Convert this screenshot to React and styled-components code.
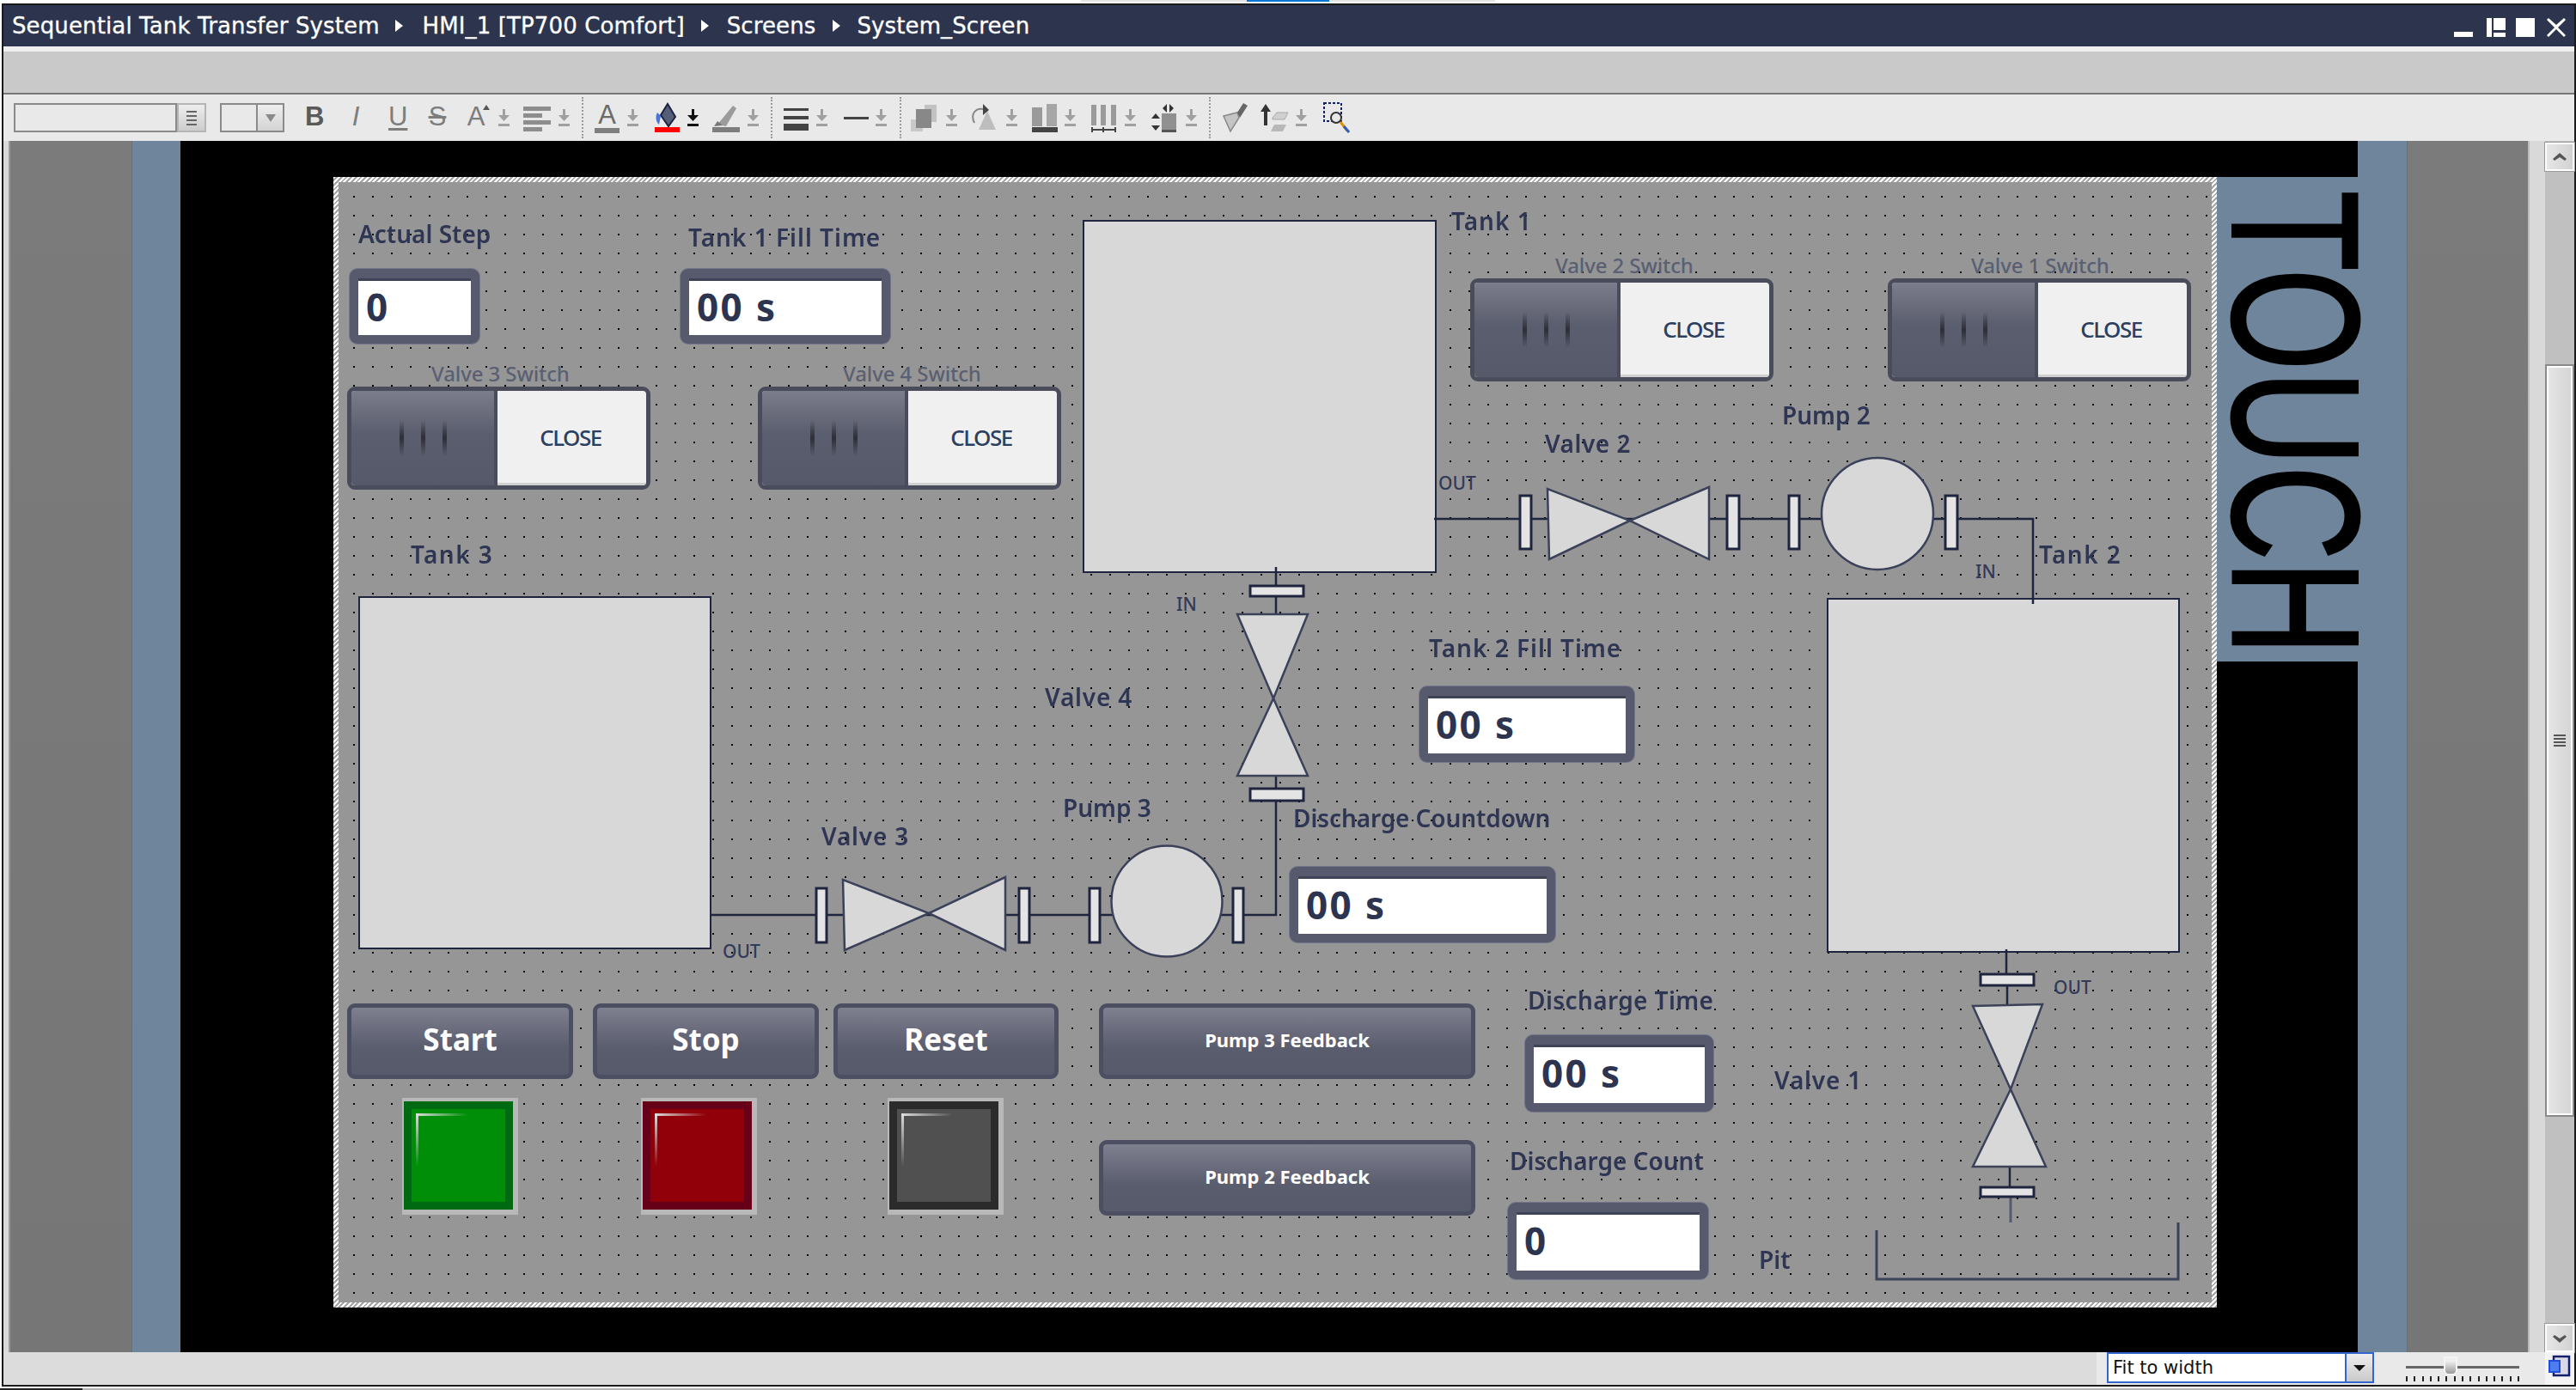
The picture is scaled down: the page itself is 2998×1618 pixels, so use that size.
import React from 'react';
import styled, { createGlobalStyle, css } from 'styled-components';

const NAVY = '#2d354e';
const LINE = '#20253f';
const FONT = '"Noto Sans", "DejaVu Sans", sans-serif';

// The design surface starts here in page coordinates, items on it use page coordinates
const ORIGIN_X = 394;
const ORIGIN_Y = 212;

const GlobalStyle = createGlobalStyle`
    html, body {
        margin: 0;
        padding: 0;
        background: #fff;
        font-family: ${FONT};
    }
`;

const Page = styled.div`
    width: 2998px;
    height: 1618px;
    overflow: hidden;
    display: flex;
    flex-direction: column;
    background: #fff;
`;
const TopTab = styled.div`
    width: 482px;
    height: 2px;
    margin: 0 0 2px 1258px;
    background: #e4e4e4;
    display: flex;
    justify-content: center;
`;
const TopTabMark = styled.div`
    width: 96px;
    background: #0a78d2;
`;
const BottomEdge = styled.div`
    height: 2px;
    margin-top: 2px;
    background: linear-gradient(90deg, #222 0 96px, #b4b4b4 96px);
`;
const Window = styled.div`
    margin-left: 2px;
    height: 1610px;
    box-sizing: border-box;
    border: 2px solid #1a1a1a;
    display: flex;
    flex-direction: column;
`;

const TitleBar = styled.div`
    height: 48px;
    background: ${NAVY};
    color: #fff;
    display: flex;
    align-items: center;
    padding-left: 10px;
    font-family: "DejaVu Sans", sans-serif;
    font-size: 26px;
    letter-spacing: 0.12px;
    -webkit-text-stroke: 0.3px #fff;
    white-space: nowrap;
`;
const Crumb = styled.span``;
const CrumbArrow = styled.span`
    width: 0;
    height: 0;
    margin: 0 ${p => p.$r}px 0 ${p => p.$l}px;
    border-left: 9px solid #fff;
    border-top: 7px solid transparent;
    border-bottom: 7px solid transparent;
`;
const WinButtons = styled.div`
    margin-left: auto;
    margin-right: 10px;
    display: flex;
    gap: 12px;
    padding-top: 3px;
`;
const WinIcon = styled.svg`
    width: 22px;
    height: 22px;
    margin-left: ${p => p.$ml || 0}px;
    fill: #fff;
`;

const RibbonGap = styled.div`
    height: 6px;
    background: #efefef;
`;
const Ribbon = styled.div`
    height: 48px;
    background: #c9c9c9;
    border-bottom: 2px solid #777;
`;

const Toolbar = styled.div`
    height: 54px;
    background: #e9e9e9;
    display: flex;
    align-items: center;
    padding-left: 12px;
`;
const FontBox = styled.div`
    width: 190px;
    height: 34px;
    box-sizing: border-box;
    border: 2px solid #8a8a8a;
`;
const GripButton = styled.div`
    width: 34px;
    height: 34px;
    box-sizing: border-box;
    border: 2px solid #b5b5b5;
    background: linear-gradient(#eee, #ccc);
    display: flex;
    flex-direction: column;
    gap: 3px;
    align-items: center;
    justify-content: center;
`;
const GripLine = styled.div`
    width: 12px;
    height: 2px;
    background: #666;
`;
const SizeBox = styled.div`
    width: 75px;
    height: 34px;
    margin-left: 16px;
    box-sizing: border-box;
    border: 2px solid #8a8a8a;
    display: flex;
    justify-content: flex-end;
`;
const SizeButton = styled.div`
    width: 31px;
    border-left: 2px solid #8a8a8a;
    box-sizing: border-box;
    background: linear-gradient(#eee, #d4d4d4);
    display: flex;
    align-items: center;
    justify-content: center;
`;
const SmallCaret = styled.div`
    width: 0;
    height: 0;
    border-left: 6px solid transparent;
    border-right: 6px solid transparent;
    border-top: 9px solid #8a8a8a;
`;
const GlyphTool = styled.span`
    position: relative;
    width: ${p => p.$w}px;
    margin-left: ${p => p.$ml}px;
    height: 36px;
    flex: none;
    text-align: center;
    font-family: "Liberation Sans", sans-serif;
    font-size: 31px;
    line-height: 34px;
    color: ${p => p.$color || '#7d7d7d'};
    font-weight: ${p => (p.$bold ? 700 : 400)};
    font-style: ${p => (p.$italic ? 'italic' : 'normal')};
    text-decoration: ${p => (p.$under ? 'underline' : p.$strike ? 'line-through' : 'none')};
    text-decoration-thickness: 3px;
    text-underline-offset: 3px;
`;
const RaiseMark = styled.span`
    position: absolute;
    right: -4px;
    top: 3px;
    width: 0;
    height: 0;
    border-left: 4px solid transparent;
    border-right: 4px solid transparent;
    border-bottom: 6px solid #555;
`;
const ColorGlyph = styled.span`
    width: 29px;
    margin-left: ${p => p.$ml}px;
    height: 36px;
    box-sizing: border-box;
    flex: none;
    text-align: center;
    font-family: "Liberation Sans", sans-serif;
    font-size: 31px;
    line-height: 30px;
    color: #6a6a6a;
    border-bottom: 6px solid #7d7d7d;
`;
const ToolIcon = styled.svg`
    width: ${p => p.$w}px;
    height: 36px;
    margin-left: ${p => p.$ml}px;
    flex: none;
`;
const ToolSep = styled.div`
    width: 0;
    height: 48px;
    margin-left: ${p => p.$ml}px;
    border-left: 2px dotted #999;
`;

const Workspace = styled.div`
    height: 1410px;
    display: flex;
`;
const Gutter = styled.div`
    width: 6px;
    background: #d9d9d9;
    border-right: 2px solid #999;
`;
const SideGray = styled.div`
    width: ${p => p.$w}px;
    background: linear-gradient(#7b7b7b, #767676);
`;
const SideBlue = styled.div`
    width: ${p => p.$w}px;
    background: #6f859b;
    box-shadow: inset ${p => p.$edge}px 0 0 #5f7286;
`;
const Stage = styled.div`
    flex: 1;
    background: #000;
    display: flex;
    align-items: flex-start;
    padding: 42px 0 0 178px;
`;
const SelectionFrame = styled.div`
    width: 2192px;
    height: 1316px;
    flex: none;
    box-sizing: border-box;
    padding: 6px;
    background: repeating-linear-gradient(135deg, #fff 0 2px, #a6a6a6 2px 4px);
`;
const Surface = styled.div`
    position: relative;
    width: 100%;
    height: 100%;
    background-color: #969696;
    background-image: conic-gradient(at 2px 2px, transparent 75%, #000 0);
    background-size: 22px 22px;
    background-position: 17px 16px;
`;
const TouchBand = styled.div`
    flex: 1;
    height: 564px;
    background: #6f859b;
    display: flex;
    justify-content: flex-end;
`;
const TouchText = styled.div`
    writing-mode: vertical-rl;
    font-family: "Liberation Sans", sans-serif;
    font-size: 210px;
    line-height: 146px;
    height: 564px;
    margin-top: 16px;
    color: #000;
    -webkit-text-stroke: 3px #000;
    transform: scaleY(0.728);
    transform-origin: top;
    white-space: nowrap;
`;
const ThinStrip = styled.div`
    width: 18px;
    background: #d9d9d9;
    border-left: 2px solid #bdbdbd;
`;
const ScrollBar = styled.div`
    width: 34px;
    flex: none;
    background: #c0c0c0;
    display: flex;
    flex-direction: column;
    padding-top: 2px;
    box-sizing: border-box;
`;
const ScrollButton = styled.div`
    height: 33px;
    margin-top: ${p => p.$mt || 0};
    box-sizing: border-box;
    border: 2px solid #fff;
    outline: 1px solid #9a9a9a;
    background: linear-gradient(90deg, #e6e6e6, #d2d2d2);
    display: flex;
    align-items: center;
    justify-content: center;
`;
const ScrollThumb = styled.div`
    height: 876px;
    margin-top: 225px;
    box-sizing: border-box;
    border: 2px solid #8a8a8a;
    box-shadow: inset 0 0 0 2px #fff;
    background: linear-gradient(90deg, #e6e6e6, #d4d4d4);
    display: flex;
    flex-direction: column;
    gap: 2px;
    align-items: center;
    justify-content: center;
`;
const ThumbLine = styled.div`
    width: 14px;
    height: 2px;
    background: #555;
`;

const StatusBar = styled.div`
    height: 38px;
    display: flex;
    background: #e9e9e9;
`;
const StatusLeft = styled.div`
    width: 2436px;
    background: #dcdcdc;
`;
const ZoomCombo = styled.div`
    width: 311px;
    height: 36px;
    margin-left: 12px;
    box-sizing: border-box;
    border: 2px solid #3366cc;
    background: #fff;
    display: flex;
    align-items: center;
    padding-left: 5px;
    font-family: "DejaVu Sans", sans-serif;
    font-size: 21px;
    color: #111;
`;
const ComboButton = styled.div`
    width: 32px;
    height: 100%;
    margin-left: auto;
    box-sizing: border-box;
    border-left: 2px solid #3366cc;
    background: linear-gradient(#eee, #c9c9c9);
    display: flex;
    align-items: center;
    justify-content: center;
`;
const ComboCaret = styled.div`
    width: 0;
    height: 0;
    border-left: 7px solid transparent;
    border-right: 7px solid transparent;
    border-top: 7px solid #111;
`;
const ZoomSlider = styled.div`
    position: relative;
    width: 132px;
    margin-left: 37px;
    height: 100%;
`;
const SliderTrack = styled.div`
    position: absolute;
    top: 16px;
    width: 100%;
    height: 3px;
    background: #666;
`;
const SliderThumb = styled.div`
    position: absolute;
    top: 5px;
    left: 44px;
    width: 16px;
    height: 22px;
    box-sizing: border-box;
    border: 2px solid #f4f4f4;
    border-radius: 2px 2px 6px 6px;
    background: linear-gradient(#eee 20%, #999);
`;
const SliderTicks = styled.div`
    position: absolute;
    top: 28px;
    width: 100%;
    display: flex;
    justify-content: space-between;
`;
const SliderTick = styled.div`
    width: 2px;
    height: 6px;
    background: #222;
`;
const StatusCorner = styled.div`
    width: 34px;
    margin-left: 30px;
    background: #f4f4f4;
`;
const CornerIcon = styled.svg`
    width: 26px;
    height: 26px;
    margin: 3px 0 0 4px;
`;

// items on the HMI surface, placed at their own spot on the free canvas
const placed = css`
    position: absolute;
    left: ${p => p.$x - ORIGIN_X}px;
    top: ${p => p.$y - ORIGIN_Y}px;
`;
const boxed = css`
    ${placed};
    width: ${p => p.$w}px;
    height: ${p => p.$h}px;
    box-sizing: border-box;
`;
const Label = styled.div`
    ${placed};
    font-size: 28px;
    line-height: 28px;
    font-weight: 600;
    color: #2f3654;
    white-space: nowrap;
    margin-top: -5px;
    letter-spacing: ${p => p.$ls || 0}px;
    filter: blur(0.4px);
`;
const PortLabel = styled.div`
    ${placed};
    font-size: 21px;
    line-height: 21px;
    font-weight: 500;
    color: #333a58;
    white-space: nowrap;
    margin-top: -3px;
`;
const SwitchLabel = styled.div`
    ${placed};
    font-size: 24px;
    line-height: 24px;
    font-weight: 500;
    color: #5a5f72;
    white-space: nowrap;
    margin-top: -5px;
    letter-spacing: -0.1px;
`;
const Tank = styled.div`
    ${boxed};
    background: #d8d8d8;
    border: 2px solid ${LINE};
`;
const Field = styled.div`
    ${boxed};
    padding: 10px;
    padding-top: 11px;
    background: #565a6c;
    border-radius: 9px;
    box-shadow: 0 0 0 1px #74768a;
`;
const FieldInner = styled.div`
    height: 100%;
    background: #fff;
    border-top: 3px solid #3f4356;
    box-sizing: border-box;
    padding-left: 9px;
    font-size: 44px;
    line-height: 60px;
    letter-spacing: 2.4px;
    font-weight: 700;
    color: #2d3450;
    white-space: nowrap;
`;
const Switch = styled.div`
    ${boxed};
    display: flex;
    border: 5px solid #4a4c5c;
    border-radius: 9px;
    background: #f0f0f0;
    overflow: hidden;
`;
const SwitchKnob = styled.div`
    width: 170px;
    flex: none;
    box-sizing: border-box;
    border-right: 4px solid #4a4c5c;
    background: linear-gradient(#7b7c8c, #5b5e6e 45%, #555969);
    display: flex;
    align-items: center;
    justify-content: center;
    gap: 20px;
`;
const KnobGrip = styled.div`
    width: 5px;
    height: 42px;
    background: linear-gradient(transparent, #2d2e38 50%, transparent);
`;
const SwitchState = styled.div`
    flex: 1;
    display: flex;
    align-items: center;
    justify-content: center;
    padding-right: 3px;
    font-size: 26px;
    font-weight: 500;
    letter-spacing: -1.5px;
    color: #2b4060;
    border-bottom: 3px solid #d0d0d0;
`;
const PushButton = styled.div`
    ${boxed};
    display: flex;
    align-items: center;
    justify-content: center;
    padding-bottom: 5px;
    border: 5px solid #4c4f62;
    border-radius: 9px;
    background: linear-gradient(#7e7f8f, #5a5d6e 60%, #565a6a);
    color: #fff;
    font-weight: 700;
    font-size: ${p => p.$size}px;
    white-space: nowrap;
`;
const Lamp = styled.div`
    ${placed};
    width: 135px;
    height: 136px;
    box-sizing: border-box;
    padding: 4px 6px 6px 2px;
    background: #b8b8b8;
`;
const LampFace = styled.div`
    position: relative;
    height: 100%;
    box-sizing: border-box;
    background: ${p => p.$fill};
    border: 9px solid ${p => p.$rim};

    &:before {
        content: '';
        position: absolute;
        left: 5px;
        top: 5px;
        width: 60px;
        height: 3px;
        background: linear-gradient(90deg, #ddd, transparent);
    }
    &:after {
        content: '';
        position: absolute;
        left: 5px;
        top: 5px;
        width: 3px;
        height: 62px;
        background: linear-gradient(#ddd, transparent);
    }
`;
const Piping = styled.svg`
    position: absolute;
    left: 0;
    top: 0;
    width: 100%;
    height: 100%;
`;

const LABELS = [
    ['Actual Step', 417, 263],
    ['Tank 1 Fill Time', 801, 267, 1],
    ['Tank 1', 1689, 248, 1],
    ['Valve 2', 1798, 507, 0.5],
    ['Pump 2', 2074, 474],
    ['Tank 3', 478, 636, 1.4],
    ['Tank 2', 2373, 636, 1.4],
    ['Valve 4', 1216, 802, 0.8],
    ['Tank 2 Fill Time', 1663, 745, 1],
    ['Valve 3', 956, 964, 0.8],
    ['Pump 3', 1237, 931],
    ['Discharge Countdown', 1505, 943, -0.1],
    ['Discharge Time', 1778, 1155, 0.4],
    ['Discharge Count', 1757, 1342],
    ['Valve 1', 2065, 1248, 0.8],
    ['Pit', 2047, 1457],
];
const PORTS = [
    ['OUT', 1674, 555],
    ['IN', 2299, 658],
    ['IN', 1369, 696],
    ['OUT', 841, 1100],
    ['OUT', 2390, 1142],
];
const SWITCHES = [
    ['Valve 3 Switch', 404, 450, 502, 428],
    ['Valve 4 Switch', 882, 450, 981, 428],
    ['Valve 2 Switch', 1711, 324, 1810, 302],
    ['Valve 1 Switch', 2197, 324, 2294, 302],
];
const FIELDS = [
    ['0', 407, 313, 151, 87],
    ['00 s', 792, 313, 244, 87],
    ['00 s', 1652, 799, 250, 88],
    ['00 s', 1501, 1009, 309, 88],
    ['00 s', 1775, 1205, 219, 89],
    ['0', 1755, 1400, 233, 89],
];
const BUTTONS = [
    ['Start', 404, 1168, 263, 88, 35],
    ['Stop', 690, 1168, 263, 88, 35],
    ['Reset', 970, 1168, 262, 88, 35],
    ['Pump 3 Feedback', 1279, 1168, 438, 88, 22],
    ['Pump 2 Feedback', 1279, 1327, 438, 88, 22],
];
const LAMPS = [
    [468, '#008e08', '#006a12'],
    [746, '#910008', '#650018'],
    [1033, '#505050', '#2b2b2b'],
];
const TANKS = [
    [1260, 256, 412, 411],
    [417, 694, 411, 411],
    [2126, 696, 411, 413],
];
const FLANGES = [
    [1769, 577, 13, 62],
    [2010, 577, 14, 62],
    [2082, 577, 12, 62],
    [2264, 577, 14, 62],
    [950, 1034, 12, 63],
    [1186, 1034, 12, 63],
    [1268, 1034, 12, 63],
    [1435, 1034, 12, 63],
    [1455, 682, 62, 12],
    [1455, 918, 62, 14],
    [2305, 1134, 62, 13],
    [2305, 1382, 62, 11],
];
const VALVES = [
    '1801,569 1803,651 1897,606',
    '1989,567 1989,651 1897,606',
    '981,1024 983,1106 1081,1063',
    '1170,1021 1170,1106 1081,1063',
    '1440,715 1522,715 1482,813',
    '1440,903 1522,903 1482,813',
    '2296,1171 2377,1169 2340,1268',
    '2296,1358 2381,1358 2340,1268',
];

const Drop = ({ ml, dark }) => (
    <ToolIcon $w={13} $ml={ml} viewBox="0 0 13 36">
        <path d="M5 8h3v7h5l-6.500 7L0 15h5z" fill={dark ? '#111' : '#a0a0a0'} />
        <rect y="25" width="13" height="3" fill={dark ? '#111' : '#a0a0a0'} />
    </ToolIcon>
);

const Toolbox = () => (
    <Toolbar>
        <FontBox />
        <GripButton>
            <GripLine />
            <GripLine />
            <GripLine />
            <GripLine />
        </GripButton>
        <SizeBox>
            <SizeButton>
                <SmallCaret />
            </SizeButton>
        </SizeBox>
        <GlyphTool $w={22} $ml={24} $bold $color="#5a5a5a">B</GlyphTool>
        <GlyphTool $w={12} $ml={31} $italic>I</GlyphTool>
        <GlyphTool $w={22} $ml={32} $under>U</GlyphTool>
        <GlyphTool $w={22} $ml={24} $strike>S</GlyphTool>
        <GlyphTool $w={24} $ml={22}>A<RaiseMark /></GlyphTool>
        <Drop ml={14} />
        <ToolIcon $w={32} $ml={16} viewBox="0 0 32 36" fill="#8d8d8d">
            <rect y="5" width="32" height="5" />
            <rect y="13" width="22" height="5" />
            <rect y="21" width="32" height="5" />
            <rect y="29" width="22" height="5" />
        </ToolIcon>
        <Drop ml={9} />
        <ToolSep $ml={14} />
        <ColorGlyph $ml={13}>A</ColorGlyph>
        <Drop ml={9} />
        <ToolIcon $w={29} $ml={19} viewBox="0 0 29 36">
            <path d="M15 2l9 15-8 11-9-13z" fill="#555e78" stroke="#1c2140" strokeWidth="2" />
            <path d="M3 12c-3 5-1 12 2 14l2-10z" fill="#4a74d8" />
            <rect y="29" width="29" height="6" fill="#ff0000" />
        </ToolIcon>
        <Drop ml={9} dark />
        <ToolIcon $w={32} $ml={16} viewBox="0 0 32 36">
            <path d="M6 26L24 4l4 3-12 21z" fill="#9b9b9b" />
            <path d="M2 28l4-6 6 5z" fill="#777" />
            <rect y="29" width="32" height="6" fill="#7d7d7d" />
        </ToolIcon>
        <Drop ml={9} />
        <ToolSep $ml={14} />
        <ToolIcon $w={29} $ml={13} viewBox="0 0 29 36" fill="#444">
            <rect y="7" width="29" height="3" />
            <rect y="16" width="29" height="4" />
            <rect y="25" width="29" height="8" />
        </ToolIcon>
        <Drop ml={9} />
        <ToolIcon $w={29} $ml={19} viewBox="0 0 29 36">
            <rect y="17" width="29" height="3" fill="#444" />
        </ToolIcon>
        <Drop ml={8} />
        <ToolSep $ml={15} />
        <ToolIcon $w={32} $ml={11} viewBox="0 0 32 36">
            <rect x="16" y="3" width="14" height="20" fill="#c2c2c2" />
            <rect x="0" y="20" width="14" height="14" fill="#c8c8c8" />
            <rect x="6" y="8" width="18" height="22" fill="#888" />
        </ToolIcon>
        <Drop ml={9} />
        <ToolIcon $w={31} $ml={15} viewBox="0 0 31 36">
            <path d="M10 32L20 10l10 22z" fill="#bdbdbd" />
            <path d="M5 24C0 14 6 6 16 8" fill="none" stroke="#888" strokeWidth="2" />
            <path d="M15 2l7 7-7 6z" fill="#444" />
        </ToolIcon>
        <Drop ml={11} />
        <ToolIcon $w={30} $ml={17} viewBox="0 0 30 36">
            <rect x="0" y="6" width="12" height="22" fill="#9a9a9a" />
            <rect x="17" y="2" width="12" height="26" fill="#a6a6a6" />
            <rect y="29" width="30" height="6" fill="#444" />
        </ToolIcon>
        <Drop ml={8} />
        <ToolIcon $w={31} $ml={17} viewBox="0 0 31 36">
            <rect x="1" y="3" width="6" height="24" fill="#9a9a9a" />
            <rect x="12" y="3" width="6" height="24" fill="#9a9a9a" />
            <rect x="24" y="3" width="6" height="24" fill="#9a9a9a" />
            <path d="M2 29v6M2 32h27M29 29v6M15 29v6" stroke="#444" strokeWidth="2" />
        </ToolIcon>
        <Drop ml={9} />
        <ToolIcon $w={31} $ml={18} viewBox="0 0 31 36">
            <path d="M18 2l-5 5 5 5zM21 2l5 5-5 5z" fill="#333" />
            <rect x="12" y="13" width="17" height="19" fill="#909090" />
            <path d="M5 13l-5 6h10zM5 33l-5-6h10z" fill="#333" />
            <rect x="12" y="32" width="17" height="3" fill="#555" />
        </ToolIcon>
        <Drop ml={9} />
        <ToolSep $ml={14} />
        <ToolIcon $w={31} $ml={13} viewBox="0 0 31 36">
            <path d="M2 16l16-4 2 6-10 16z" fill="#c4c4c4" stroke="#888" strokeWidth="1.500" />
            <path d="M18 12l7-11 5 3-9 14z" fill="#666" />
        </ToolIcon>
        <ToolIcon $w={33} $ml={14} viewBox="0 0 33 36">
            <path d="M6 2l6 9H8v16H4V11H0z" fill="#333" />
            <path d="M14 18l5-6h13l-4 8H14z" fill="#d0d0d0" stroke="#aaa" />
            <path d="M12 34l4-8h14l-4 8z" fill="#b8b8b8" />
        </ToolIcon>
        <Drop ml={8} />
        <ToolIcon $w={31} $ml={19} viewBox="0 0 31 36">
            <rect x="1" y="1" width="20" height="21" fill="none" stroke="#14206a" strokeWidth="2" strokeDasharray="3 2" />
            <circle cx="15" cy="18" r="6" fill="#e8e8e8" stroke="#333" strokeWidth="2" />
            <path d="M20 23l8 10" stroke="#e09000" strokeWidth="3" />
            <path d="M24 28l6 7" stroke="#3060b0" strokeWidth="3" />
        </ToolIcon>
    </Toolbar>
);

const App = () => {
    const ticks = Array.from({ length: 15 }, (_, i) => i);
    return (
        <Page>
            <GlobalStyle />
            <TopTab>
                <TopTabMark />
            </TopTab>
            <Window>
                <TitleBar>
                    <Crumb>Sequential Tank Transfer System</Crumb>
                    <CrumbArrow $l={18} $r={23} />
                    <Crumb>HMI_1 [TP700 Comfort]</Crumb>
                    <CrumbArrow $l={19} $r={21} />
                    <Crumb>Screens</Crumb>
                    <CrumbArrow $l={20} $r={19} />
                    <Crumb>System_Screen</Crumb>
                    <WinButtons>
                        <WinIcon viewBox="0 0 22 22"><rect y="16" width="22" height="6" /></WinIcon>
                        <WinIcon $ml={4} viewBox="0 0 22 22">
                            <rect width="6" height="22" />
                            <rect x="8" width="14" height="14" />
                            <rect x="8" y="17" width="14" height="5" />
                        </WinIcon>
                        <WinIcon viewBox="0 0 22 22"><rect width="22" height="22" /></WinIcon>
                        <WinIcon $ml={2} viewBox="0 0 22 22">
                            <path d="M2 0l9 8 9-8 2 2-9 9 9 9-2 2-9-9-9 9-2-2 9-9-9-9z" />
                        </WinIcon>
                    </WinButtons>
                </TitleBar>
                <RibbonGap />
                <Ribbon />
                <Toolbox />
                <Workspace>
                    <Gutter />
                    <SideGray $w={141} />
                    <SideBlue $w={57} $edge={1} />
                    <Stage>
                        <SelectionFrame>
                            <Surface>
                                {TANKS.map(([x, y, w, h]) => (
                                    <Tank key={x} $x={x} $y={y} $w={w} $h={h} />
                                ))}
                                <Piping viewBox={`${ORIGIN_X} ${ORIGIN_Y} 2180 1304`}>
                                    <g fill="none" stroke={LINE} strokeWidth="2.500">
                                        <path d="M1669 604H2366V703" />
                                        <path d="M828 1065H1485V932" />
                                        <path d="M1485 660V715M1485 903V918" />
                                        <path d="M2335 1105V1134M2336 1147V1170M2339 1358V1382" />
                                        <path d="M2340 1393V1423" stroke="#555a6c" strokeWidth="3" />
                                        <path d="M2184 1432V1489H2535V1423" stroke="#3c415a" strokeWidth="3" />
                                    </g>
                                    <g fill="#d8d8d8" stroke="#3c415a" strokeWidth="2.500">
                                        {VALVES.map(points => <polygon key={points} points={points} />)}
                                        <circle cx="2185" cy="598" r="65" />
                                        <circle cx="1358" cy="1049" r="64.500" />
                                    </g>
                                    <g fill="#e4e4e4" stroke={LINE} strokeWidth="3">
                                        {FLANGES.map(([x, y, w, h]) => (
                                            <rect key={`${x}-${y}`} x={x} y={y} width={w} height={h} />
                                        ))}
                                    </g>
                                </Piping>
                                {LABELS.map(([text, x, y, ls]) => (
                                    <Label key={text} $x={x} $y={y} $ls={ls}>{text}</Label>
                                ))}
                                {PORTS.map(([text, x, y]) => (
                                    <PortLabel key={`${x}-${y}`} $x={x} $y={y}>{text}</PortLabel>
                                ))}
                                {SWITCHES.map(([text, x, y, lx, ly]) => (
                                    <React.Fragment key={text}>
                                        <SwitchLabel $x={lx} $y={ly}>{text}</SwitchLabel>
                                        <Switch $x={x} $y={y} $w={353} $h={120}>
                                            <SwitchKnob>
                                                <KnobGrip />
                                                <KnobGrip />
                                                <KnobGrip />
                                            </SwitchKnob>
                                            <SwitchState>CLOSE</SwitchState>
                                        </Switch>
                                    </React.Fragment>
                                ))}
                                {FIELDS.map(([text, x, y, w, h]) => (
                                    <Field key={`${x}-${y}`} $x={x} $y={y} $w={w} $h={h}>
                                        <FieldInner>{text}</FieldInner>
                                    </Field>
                                ))}
                                {BUTTONS.map(([text, x, y, w, h, size]) => (
                                    <PushButton key={text} $x={x} $y={y} $w={w} $h={h} $size={size}>{text}</PushButton>
                                ))}
                                {LAMPS.map(([x, fill, rim]) => (
                                    <Lamp key={x} $x={x} $y={1278}>
                                        <LampFace $fill={fill} $rim={rim} />
                                    </Lamp>
                                ))}
                            </Surface>
                        </SelectionFrame>
                        <TouchBand>
                            <TouchText>TOUCH</TouchText>
                        </TouchBand>
                    </Stage>
                    <SideBlue $w={58} $edge={-1} />
                    <SideGray $w={140} />
                    <ThinStrip />
                    <ScrollBar>
                        <ScrollButton>
                            <svg width="16" height="10" viewBox="0 0 16 10"><path d="M8 0l8 7-2 2-6-4-6 4-2-2z" fill="#555" /></svg>
                        </ScrollButton>
                        <ScrollThumb>
                            <ThumbLine />
                            <ThumbLine />
                            <ThumbLine />
                            <ThumbLine />
                        </ScrollThumb>
                        <ScrollButton $mt="auto">
                            <svg width="16" height="10" viewBox="0 0 16 10"><path d="M8 10L0 3l2-2 6 4 6-4 2 2z" fill="#555" /></svg>
                        </ScrollButton>
                    </ScrollBar>
                </Workspace>
                <StatusBar>
                    <StatusLeft />
                    <ZoomCombo>
                        Fit to width
                        <ComboButton>
                            <ComboCaret />
                        </ComboButton>
                    </ZoomCombo>
                    <ZoomSlider>
                        <SliderTrack />
                        <SliderThumb />
                        <SliderTicks>
                            {ticks.map(i => <SliderTick key={i} />)}
                        </SliderTicks>
                    </ZoomSlider>
                    <StatusCorner>
                        <CornerIcon viewBox="0 0 26 26">
                            <rect x="6" y="2" width="18" height="22" fill="#d8d8e8" stroke="#14206a" strokeWidth="2.500" />
                            <rect x="1" y="7" width="12" height="13" fill="#4f7cf0" stroke="#1f4fd8" strokeWidth="2" />
                        </CornerIcon>
                    </StatusCorner>
                </StatusBar>
            </Window>
            <BottomEdge />
        </Page>
    );
};

export default App;
